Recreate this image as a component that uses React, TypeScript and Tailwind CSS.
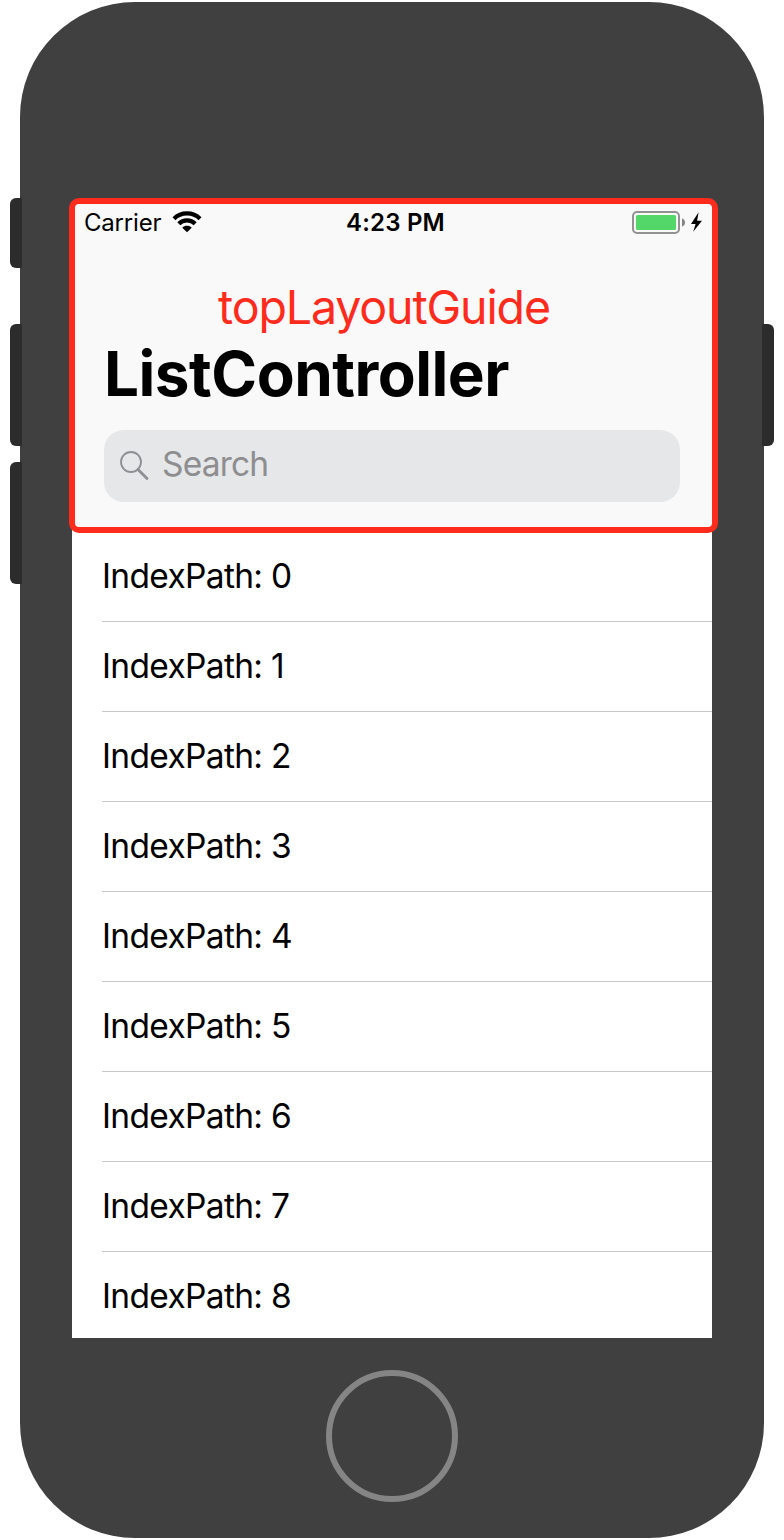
const rows = [0, 1, 2, 3, 4, 5, 6, 7, 8];

function StatusBar() {
  return (
    <div className="grid h-10 grid-cols-[262px_1fr_82px] items-center text-black">
      <div className="flex items-center pl-3">
        <span className="w-[88px] pt-px text-2xl leading-[39px] tracking-[-0.2px]">Carrier</span>
        <svg width="30" height="22" viewBox="0 0 30 22" fill="none" stroke="#000">
          <path d="M2 7.7C9 0.7 21 0.7 28 7.7" strokeWidth="4.2" />
          <path d="M6.8 12.8C11.3 8.3 18.7 8.3 23.2 12.8" strokeWidth="4.2" />
          <path d="M15 21.2L10.3 16.7C12.8 14.2 17.2 14.2 19.7 16.7Z" fill="#000" stroke="none" />
        </svg>
      </div>
      <div className="pt-px pl-3 text-2xl leading-[39px] font-semibold tracking-[0.2px]">4:23 PM</div>
      <svg width="74" height="24" viewBox="0 0 74 24" fill="none">
        <rect x="3" y="2" width="46" height="21" rx="4" stroke="#929292" strokeWidth="2" />
        <rect x="6" y="5" width="40" height="15" rx="1.5" fill="#53D769" />
        <path d="M52 8.5C56 9.5 56 15.5 52 16.5Z" fill="#858585" />
        <path d="M68.6 2.2L61 14H65.6L63.2 21.8L72 10.7H67.1Z" fill="#000" />
      </svg>
    </div>
  );
}

function Header() {
  return (
    <header className="h-[330px] bg-[#f9f9f9]">
      <StatusBar />
      <div className="mt-[37px] pl-[146px] text-[46.5px] leading-14 tracking-[-1.13px] whitespace-nowrap text-[#ff2b1c]">
        topLayoutGuide
      </div>
      <h1 className="pl-8 text-[62px] leading-[77px] font-bold tracking-[-0.5px] whitespace-nowrap text-black">
        ListController
      </h1>
      <div className="mx-8 mt-[18px] flex h-[72px] items-center rounded-[20px] bg-[#e6e7e9] pl-4 text-[#8e8e93]">
        <svg width="30" height="30" viewBox="0 0 30 30" fill="none" stroke="currentColor">
          <circle cx="11" cy="11" r="10" strokeWidth="1.8" />
          <path d="M18 18.5L27 27.5" strokeWidth="2.8" strokeLinecap="round" />
        </svg>
        <span className="mb-1 ml-3 text-[33.5px] leading-10 tracking-[-0.8px] text-[#8e8e90]">Search</span>
      </div>
    </header>
  );
}

function SideButton({ className }: { className: string }) {
  return <div className={`w-3 bg-[#2c2c2c] ${className}`} />;
}

export default function App() {
  return (
    <main
      className="flex h-[1540px] w-[784px] justify-center bg-white pt-0.5"
      style={{ fontFamily: 'Inter, "Liberation Sans", sans-serif' }}
    >
      <div className="relative flex h-[1536px] w-[744px] flex-col items-center rounded-[115px] bg-[#404040] pt-[200px]">
        <div className="absolute top-[196px] -left-2.5 flex flex-col">
          <SideButton className="h-[70px] rounded-l-[6px]" />
          <SideButton className="mt-14 h-[122px] rounded-l-[6px]" />
          <SideButton className="mt-4 h-[122px] rounded-l-[6px]" />
        </div>
        <div className="absolute top-[322px] -right-2.5">
          <SideButton className="h-[122px] rounded-r-[6px]" />
        </div>
        <section className="relative h-[1136px] w-[640px] bg-white">
          <Header />
          <ul className="h-[806px] overflow-hidden">
            {rows.map((n) => (
              <li
                key={n}
                className="ml-[30px] h-[90px] border-b border-[#c8c7cc] text-[33.5px] leading-[89px] tracking-[-0.67px] whitespace-nowrap text-black"
              >
                IndexPath: {n}
              </li>
            ))}
          </ul>
          <div className="absolute -top-1 -left-[3px] h-[335px] w-[649px] rounded-[10px] border-6 border-[#ff2b1c]" />
        </section>
        <div className="mt-8 h-[132px] w-[132px] rounded-full border-6 border-[#858585]" />
      </div>
    </main>
  );
}
